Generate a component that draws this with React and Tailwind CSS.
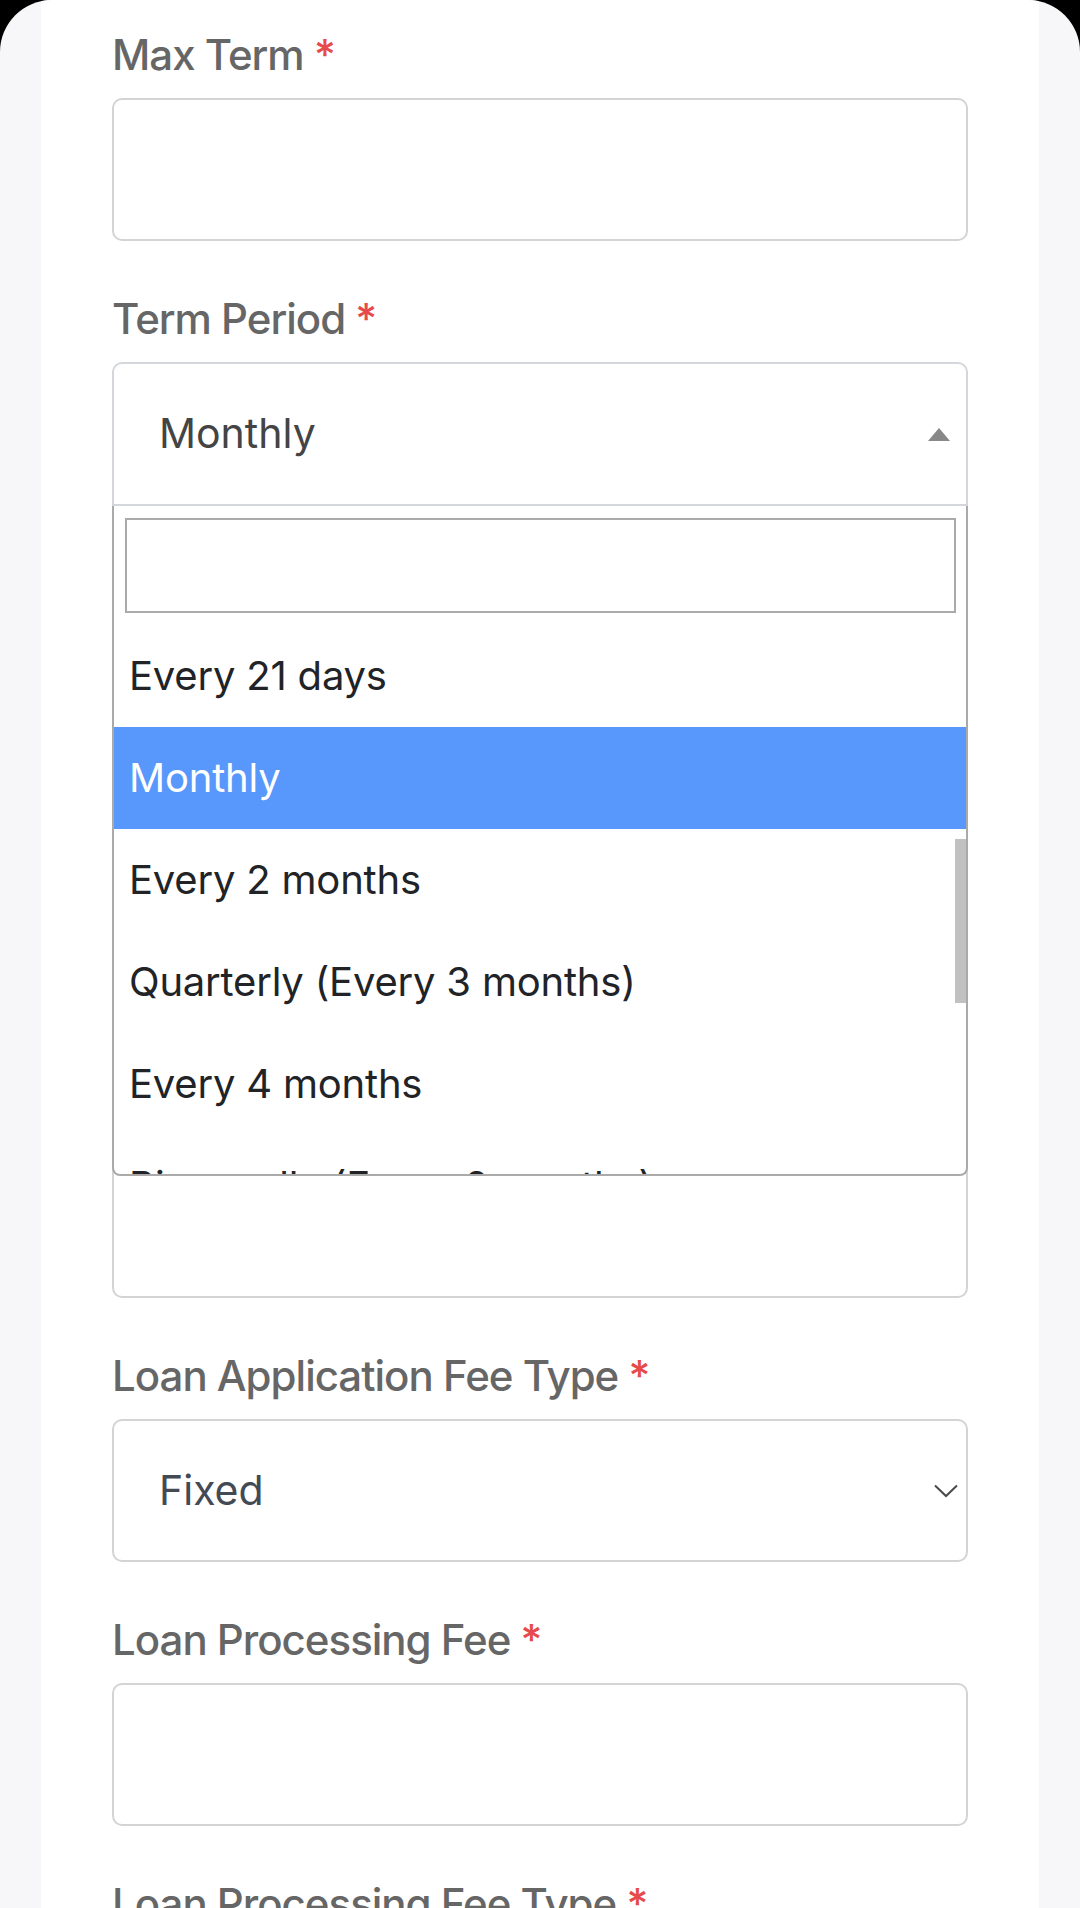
import React from 'react';

const font = { fontFamily: 'Inter, "Noto Sans", sans-serif' };

// --- label with the red required mark ---
const Label = ({ children }) => (
    <div className="h-[58px] leading-[58px] text-[42px] font-medium tracking-[-1px] text-[#666666] whitespace-nowrap">
        {children} <span className="text-[#e74a4a]">*</span>
    </div>
);

const TextField = ({ label }) => (
    <div className="flex flex-col">
        <Label>{label}</Label>
        <div className="mt-[14px] h-[143px] rounded-[10px] border-2 border-[#d4d4d4] bg-white"></div>
    </div>
);

const Chevron = () => (
    <svg width="24" height="14" viewBox="0 0 24 14" fill="none">
        <polyline points="1,1.5 12,12 23,1.5" stroke="#4a4a4a" strokeWidth="2" />
    </svg>
);

const options = [
    { label: 'Every 21 days' },
    { label: 'Monthly', active: true },
    { label: 'Every 2 months' },
    { label: 'Quarterly (Every 3 months)' },
    { label: 'Every 4 months' },
    { label: 'Biannually (Every 6 months)' },
];

const TermPeriod = () => (
    <div className="flex flex-col">
        <Label>Term Period</Label>
        <div className="relative mt-[14px]">
            <div className="h-[144px] rounded-t-[10px] border-2 border-[#d3d6da] bg-white flex items-center justify-between pl-[45px] pr-[16px]">
                <span className="text-[41px] text-[#444444]">Monthly</span>
                <span className="w-0 h-0 border-l-[11px] border-r-[11px] border-b-[13px] border-l-transparent border-r-transparent border-b-[#888888]"></span>
            </div>

            {/* open dropdown */}
            <div className="absolute left-0 right-0 top-[144px] z-10 h-[670px] bg-white border-2 border-t-0 border-[#aaaaaa] rounded-b-[8px] overflow-hidden flex flex-col">
                <div className="pl-[11px] pr-[10px] pt-[12px] pb-[12px]">
                    <div className="h-[95px] border-2 border-[#aaaaaa] bg-white"></div>
                </div>
                <div className="relative flex-1 overflow-hidden">
                    {options.map((o) => (
                        <div
                            key={o.label}
                            className={`h-[102px] flex items-center pl-[15px] text-[40px] tracking-[-0.2px] whitespace-nowrap ${o.active ? 'bg-[#5897fb] text-white' : 'text-[#212327]'}`}
                        >
                            {o.label}
                        </div>
                    ))}
                    <div className="absolute right-0 top-[214px] w-[11px] h-[164px] bg-[#c1c1c1]"></div>
                </div>
            </div>
        </div>
    </div>
);

const SelectField = ({ label, value }) => (
    <div className="flex flex-col">
        <Label>{label}</Label>
        <div className="mt-[14px] h-[143px] rounded-[10px] border-2 border-[#d4d4d4] bg-white flex items-center justify-between pl-[45px] pr-[8px]">
            <span className="text-[41px] text-[#434a54]">{value}</span>
            <Chevron />
        </div>
    </div>
);

export default function App() {
    return (
        <div className="w-[1080px] h-[1908px] bg-black overflow-hidden" style={font}>
            <div className="h-full bg-[#f7f6f9] rounded-t-[52px] px-[41px] overflow-hidden">
                <div className="h-full bg-white px-[71px] pt-[26px] flex flex-col gap-[49px]">
                    <TextField label="Max Term" />
                    <TermPeriod />
                    <TextField label="Repayment Cycle" />
                    <TextField label="Grace Period" />
                    <TextField label="Loan Application Fee" />
                    <SelectField label="Loan Application Fee Type" value="Fixed" />
                    <TextField label="Loan Processing Fee" />
                    <TextField label="Loan Processing Fee Type" />
                </div>
            </div>
        </div>
    );
}
